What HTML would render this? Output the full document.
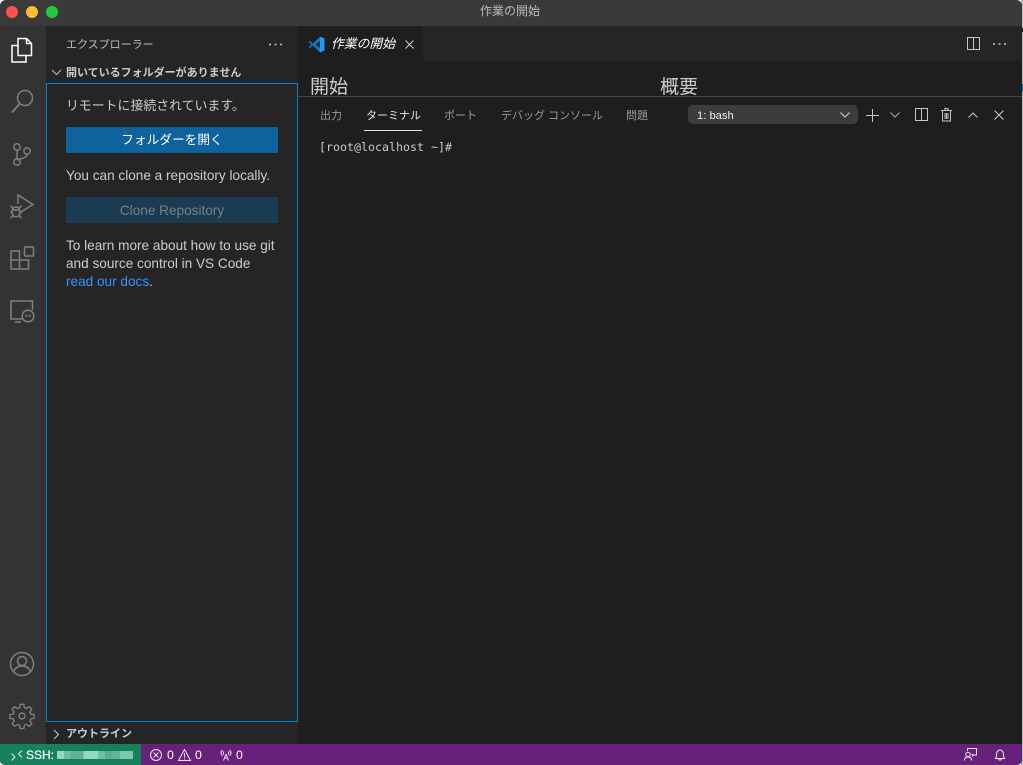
<!DOCTYPE html>
<html lang="ja">
<head>
<meta charset="utf-8">
<style>
html,body{margin:0;padding:0;background:#fff;}
#edge{position:absolute;left:1021px;top:0;width:2px;height:765px;background:#b9b9b9;}
#app{position:absolute;left:0;top:0;width:1022px;height:765px;overflow:hidden;background:#1e1e1e;border-radius:6px 6px 5px 5px;font-family:"Liberation Sans","Noto Sans CJK JP",sans-serif;color:#ccc;filter:blur(.3px);}
.a{position:absolute;white-space:nowrap;}
svg{position:absolute;overflow:visible;fill:none;}
.t{font-size:13.6px;line-height:18px;color:#ccc;}
</style>
</head>
<body>
<div id="edge"></div>
<div class="a" style="left:1021px;top:84px;width:2px;height:7px;background:#0a6e9e;"></div>
<div class="a" style="left:1021px;top:28px;width:2px;height:4px;background:#222;"></div>
<div id="app">
  <!-- title bar -->
  <div class="a" style="left:0;top:0;width:1023px;height:26px;background:#3a3a3a;"></div>
  <div class="a" style="left:6px;top:6px;width:12px;height:12px;border-radius:50%;background:#fe5050;"></div>
  <div class="a" style="left:26px;top:6px;width:12px;height:12px;border-radius:50%;background:#febb2e;"></div>
  <div class="a" style="left:46px;top:6px;width:12px;height:12px;border-radius:50%;background:#27c83f;"></div>
  <div class="a" style="left:0;top:3px;width:1020px;text-align:center;font-size:12px;line-height:17px;color:#b8b8b8;">作業の開始</div>

  <!-- activity bar -->
  <div class="a" style="left:0;top:26px;width:46px;height:718px;background:#333;"></div>
  <svg style="left:0;top:26px" width="46" height="718" stroke="#808080" stroke-width="1.5">
    <g stroke="#fff">
      <path d="M18 12.500h8.500l5 5v12h-13.500z"/>
      <path d="M26.500 12.500v5h5"/>
      <path d="M18 19.500h-6v16.500h14v-6"/>
    </g>
    <circle cx="25" cy="72" r="7.500"/>
    <path d="M19.500 78l-7.500 8.500" stroke-width="1.800"/>
    <circle cx="17" cy="121" r="3.200"/><circle cx="17" cy="136" r="3.200"/><circle cx="27" cy="125" r="3.200"/>
    <path d="M17 124.500v8M27 128.500c0 3.500-6 4-10 5.500"/>
    <path d="M18 178v-9l15 9.500-13 8"/>
    <ellipse cx="16" cy="186" rx="4" ry="5"/>
    <path d="M10.500 180l3 2.500M21.500 180l-3 2.500M10 186h2M22 186h-2M10.500 192l3-3M21.500 192l-3-3M12.500 184h7"/>
    <path d="M11 234h8.500v-9h-8.500zM11 243h8.500v-9h-8.500zM19.500 243h9v-9h-9z"/>
    <rect x="24.500" y="221" width="9" height="9" rx="1"/>
    <path d="M22 293h-11v-18h21.500v9M15 296h6"/>
    <circle cx="28" cy="290" r="5.800"/>
    <path d="M25.500 288.500l1.500 1.200-1.500 1.200M30.500 288.500l-1.500 1.200 1.500 1.200" stroke-width="1"/>
    <circle cx="22" cy="638" r="11.500"/>
    <circle cx="22" cy="635" r="4.500"/>
    <path d="M13.500 646c1.500-4.500 4.500-6 8.500-6s7 1.500 8.500 6"/>
    <g transform="translate(22 690) scale(.9) translate(-22 -690)">
      <circle cx="22" cy="690" r="3.300"/>
      <path d="M20 677h4l.7 3.800 2.200.9 3.200-2.100 2.800 2.800-2.100 3.200.9 2.200 3.800.7v4l-3.800.7-.9 2.200 2.100 3.200-2.800 2.800-3.200-2.100-2.200.9-.7 3.800h-4l-.7-3.800-2.200-.9-3.200 2.100-2.800-2.800 2.100-3.200-.9-2.200-3.800-.7v-4l3.800-.7.900-2.200-2.100-3.200 2.800-2.800 3.200 2.100 2.200-.9z"/>
    </g>
  </svg>

  <!-- sidebar -->
  <div class="a" style="left:46px;top:26px;width:252px;height:718px;background:#252526;"></div>
  <div class="a" style="left:66px;top:36.500px;font-size:11px;line-height:16px;color:#bbb;">エクスプローラー</div>
  <svg style="left:268px;top:43px" width="16" height="3"><path d="M1 1.500h2M6.500 1.500h2M12 1.500h2" stroke="#c5c5c5" stroke-width="1.500"/></svg>
  <svg style="left:51px;top:69px" width="11" height="7"><path d="M1 1l4.500 4.500L10 1" stroke="#c5c5c5" stroke-width="1"/></svg>
  <div class="a" style="left:66px;top:64.500px;font-size:11px;line-height:16px;font-weight:bold;color:#ccc;">開いているフォルダーがありません</div>
  <div class="a" style="left:46px;top:83px;width:250px;height:637px;border:1px solid #007fd4;"></div>
  <div class="a" style="left:66px;top:97px;font-size:12.9px;line-height:18px;color:#ccc;">リモートに接続されています。</div>
  <div class="a" style="left:66px;top:127px;width:212px;height:26px;background:#0e639c;color:#fff;font-size:12.7px;line-height:27px;text-align:center;">フォルダーを開く</div>
  <div class="a t" style="left:66px;top:167px;">You can clone a repository locally.</div>
  <div class="a" style="left:66px;top:197px;width:212px;height:26px;background:#1a3b52;color:#7c7f82;font-size:13.6px;line-height:27px;text-align:center;">Clone Repository</div>
  <div class="a t" style="left:66px;top:237px;">To learn more about how to use git<br>and source control in VS Code<br><span style="color:#3794ff;">read our docs</span>.</div>
  <svg style="left:53px;top:729px" width="7" height="11"><path d="M1 1l4.500 4.500L1 10" stroke="#c5c5c5" stroke-width="1"/></svg>
  <div class="a" style="left:66px;top:726px;font-size:11px;line-height:16px;font-weight:bold;color:#ccc;">アウトライン</div>

  <!-- tab bar -->
  <div class="a" style="left:298px;top:26px;width:725px;height:35px;background:#252526;"></div>
  <div class="a" style="left:298px;top:26px;width:125px;height:35px;background:#1e1e1e;"></div>
  <svg style="left:308px;top:36px" width="17" height="17">
    <path d="M12 .5L16.500 2.500V14.500L12 16.500z" fill="#1f9cf0"/>
    <path d="M12 .5L5 7.500 1.800 5 .5 5.800 3.500 8.500 .5 11.200 1.800 12 5 9.500 12 16.500V11.800L7.500 8.500 12 5.200z" fill="#0f7ac9"/>
  </svg>
  <div class="a" style="left:331px;top:34px;font-size:12.800px;line-height:19px;font-style:italic;color:#fff;">作業の開始</div>
  <svg style="left:405px;top:40px" width="9" height="9"><path d="M.5.500l8 8M8.500.500l-8 8" stroke="#ccc" stroke-width="1"/></svg>
  <svg style="left:967px;top:37px" width="13" height="13"><path d="M.5.500h12v12H.5zM6.500.500v12" stroke="#c5c5c5" stroke-width="1"/></svg>
  <svg style="left:993px;top:43px" width="13" height="2"><path d="M0 1h2M5.500 1h2M11 1h2" stroke="#c5c5c5" stroke-width="1.500"/></svg>

  <!-- editor peek -->
  <div class="a" style="left:310px;top:75px;font-size:19px;line-height:25px;color:#ccc;">開始</div>
  <div class="a" style="left:660px;top:75px;font-size:19px;line-height:25px;color:#ccc;">概要</div>

  <!-- panel -->
  <div class="a" style="left:298px;top:96px;width:725px;height:648px;background:#1e1e1e;border-top:1px solid #454545;box-sizing:border-box;"></div>
  <div class="a" style="left:320px;top:107.500px;font-size:11px;line-height:16px;color:#9a9a9a;">出力</div>
  <div class="a" style="left:366px;top:107.500px;font-size:11px;line-height:16px;color:#e7e7e7;">ターミナル</div>
  <div class="a" style="left:364px;top:130px;width:58px;height:1px;background:#e7e7e7;"></div>
  <div class="a" style="left:444px;top:107.500px;font-size:11px;line-height:16px;color:#9a9a9a;">ポート</div>
  <div class="a" style="left:501px;top:107.500px;font-size:11px;line-height:16px;color:#9a9a9a;">デバッグ コンソール</div>
  <div class="a" style="left:626px;top:107.500px;font-size:11px;line-height:16px;color:#9a9a9a;">問題</div>
  <div class="a" style="left:688px;top:105px;width:170px;height:19px;border-radius:5px;background:#3c3c3c;"></div>
  <div class="a" style="left:697px;top:108px;font-size:11.200px;line-height:16px;color:#f0f0f0;">1: bash</div>
  <svg style="left:840px;top:112px" width="10" height="6"><path d="M.5.500l4.500 4.500 4.500-4.500" stroke="#d0d0d0" stroke-width="1.100"/></svg>
  <svg style="left:866px;top:109px" width="13" height="13"><path d="M6.500 0v13M0 6.500h13" stroke="#c5c5c5" stroke-width="1"/></svg>
  <svg style="left:890px;top:112px" width="10" height="6"><path d="M.5.500l4.500 4.500 4.500-4.500" stroke="#a5a5a5" stroke-width="1"/></svg>
  <svg style="left:915px;top:108px" width="13" height="13"><path d="M.5.500h12v12H.5zM6.500.500v12" stroke="#c5c5c5" stroke-width="1"/></svg>
  <svg style="left:941px;top:108px" width="12" height="14" stroke="#c5c5c5" stroke-width="1"><path d="M0 2.500h11M4 2.500V.5h3v2M1.500 2.500v10.500h8V2.500M4 5v6M5.500 5v6M7 5v6"/></svg>
  <svg style="left:968px;top:112px" width="10" height="6"><path d="M.5 5.500L5 1l4.500 4.500" stroke="#c5c5c5" stroke-width="1"/></svg>
  <svg style="left:994px;top:110px" width="10" height="10"><path d="M.5.500l9 9M9.500.500l-9 9" stroke="#c5c5c5" stroke-width="1.100"/></svg>
  <div class="a" style="left:319px;top:139px;font-family:'DejaVu Sans Mono','Liberation Mono',monospace;font-size:11.630px;line-height:16px;color:#ccc;">[root@localhost ~]#</div>

  <!-- status bar -->
  <div class="a" style="left:0;top:744px;width:1023px;height:21px;background:#68217a;"></div>
  <div class="a" style="left:0;top:744px;width:141px;height:21px;background:#16825d;"></div>
  <svg style="left:11px;top:750px" width="12" height="11"><path d="M.5 3.500L4 7 .5 10.500M11 .5L7.500 4 11 7.500" stroke="#e8e8e8" stroke-width="1"/></svg>
  <div class="a" style="left:26px;top:747px;font-size:12px;line-height:16px;color:#fff;-webkit-text-stroke:.2px #fff;">SSH:</div>
  <div class="a" style="left:57px;top:751px;width:76px;height:8px;background:linear-gradient(90deg,#98d4c0 0 9%,#70bfa4 9% 17%,#5fb296 17% 35%,#98d5c0 35% 54%,#70bfa4 54% 63%,#58ad91 63% 72%,#5fb49a 72% 83%,#7cc6ac 83% 100%);"></div>
  <svg style="left:150px;top:749px" width="12" height="12" stroke="#f0e8f2" stroke-width="1"><circle cx="6" cy="6" r="5.500"/><path d="M3.500 3.500l5 5M8.500 3.500l-5 5"/></svg>
  <div class="a" style="left:167px;top:747px;font-size:12.300px;line-height:16px;color:#fff;">0</div>
  <svg style="left:178px;top:749px" width="13" height="12" stroke="#f0e8f2" stroke-width="1"><path d="M6.500.500L12.500 11.500H.5zM6.500 4v4.500M6.500 9.500v1"/></svg>
  <div class="a" style="left:195px;top:747px;font-size:12.300px;line-height:16px;color:#fff;">0</div>
  <svg style="left:220px;top:749px" width="12" height="12" stroke="#f0e8f2" stroke-width="1"><path d="M6 5L3.500 11.500M6 5l2.500 6.500M4.500 9h3M2.500 1C.5 3 .5 5 2.500 7M9.500 1c2 2 2 4 0 6M4 2.500C3 3.500 3 4.500 4 5.500M8 2.500c1 1 1 2 0 3"/></svg>
  <div class="a" style="left:236px;top:747px;font-size:12.300px;line-height:16px;color:#fff;">0</div>
  <svg style="left:964px;top:748px" width="13" height="13" stroke="#f0e8f2" stroke-width="1"><path d="M3.500 3V.5h9v6.500H9.500M7.500 6l2 1-1.500 1.500"/><circle cx="4" cy="6.500" r="2.200"/><path d="M.5 12.500c0-2.500 1.500-3.500 3.500-3.500s3.500 1 3.500 3.500"/></svg>
  <svg style="left:994px;top:749px" width="12" height="12" stroke="#f0e8f2" stroke-width="1"><path d="M1.500 9.500c1-1 1-2 1-4C2.500 3 4 1 6 1s3.500 2 3.500 4.500c0 2 0 3 1 4zM4.800 10c0 1.500 2.400 1.500 2.400 0"/></svg>
</div>
</body>
</html>
